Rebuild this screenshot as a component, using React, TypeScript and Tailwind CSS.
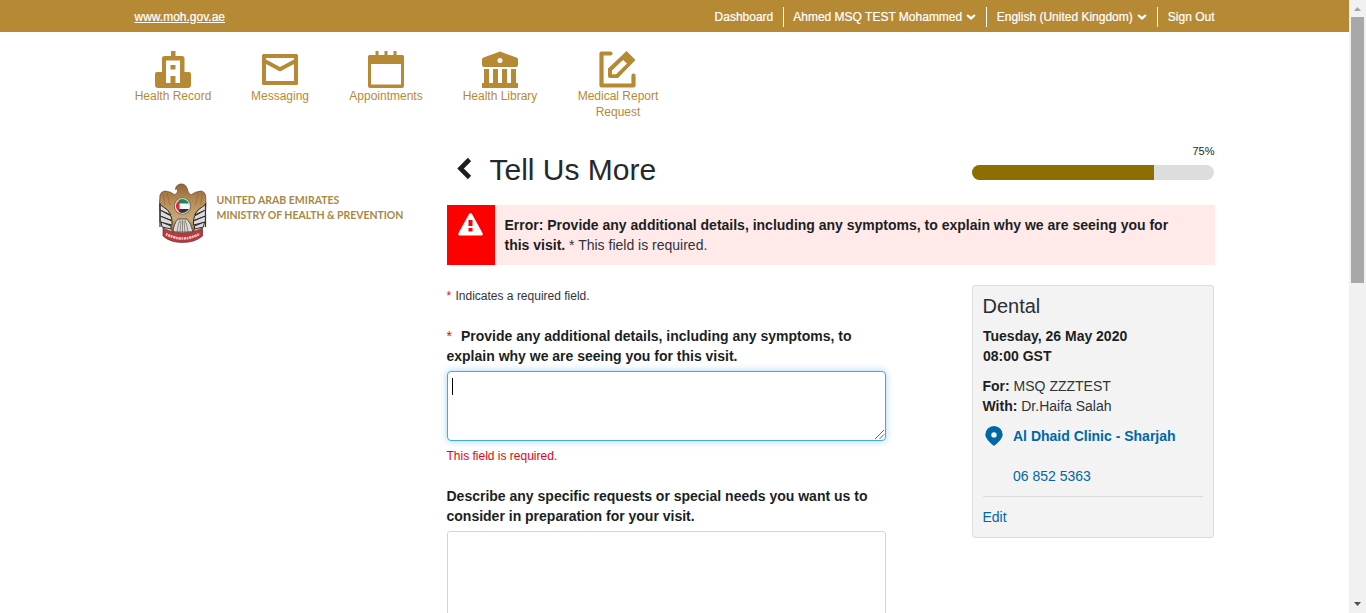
import React from "react";

const GOLD = "#b68a35";

function HospitalIcon() {
  return (
    <svg className="block" width="36" height="37" viewBox="0 0 36 37">
      <path
        fillRule="evenodd"
        fill={GOLD}
        d="M16 0h4.500v5H27q2.500 0 2.500 2.500V21H34q2 0 2 2v11q0 3-3 3H3q-3 0-3-3V23q0-2 2-2h5V7.500Q7 5 9.500 5H16zM11 9.500V32h4.500v-7h5v7H25V9.500zM15.500 14h5v4.500h-5z"
      />
    </svg>
  );
}

function EnvelopeIcon() {
  return (
    <svg className="block" width="36" height="37" viewBox="0 0 36 37">
      <path
        fillRule="evenodd"
        fill={GOLD}
        d="M1.500 3h33Q36 3 36 4.500v28q0 1.500-1.500 1.500h-33Q0 34 0 32.500v-28Q0 3 1.500 3zM4 7v1.500l14 7.500 14-7.500V7zM4 13V30h28V13L18 20.500z"
      />
    </svg>
  );
}

function CalendarIcon() {
  return (
    <svg className="block" width="36" height="37" viewBox="0 0 36 37">
      <path
        fillRule="evenodd"
        fill={GOLD}
        d="M7.500 0h3v4h6V0h3v4h6V0h3v4H34.500Q36 4 36 5.500V35q0 2-2 2H2q-2 0-2-2V5.500Q0 4 1.500 4h6zM3 13v20.500h30V13z"
      />
    </svg>
  );
}

function LibraryIcon() {
  return (
    <svg className="block" width="36" height="37" viewBox="0 0 36 37">
      <path
        fillRule="evenodd"
        fill={GOLD}
        d="M18 .5 34.500 6.500Q36 7.200 36 8.500V14q0 2-2 2H2q-2 0-2-2V8.500Q0 7.200 1.500 6.500zM18 7a2.500 2.500 0 1 0 0 5 2.500 2.500 0 0 0 0-5zM2 18h5v14h4V18h5v14h4V18h5v14h4V18h5v14h2v5H0v-5h2z"
      />
    </svg>
  );
}

function EditIcon() {
  return (
    <svg className="block" width="37" height="37" viewBox="0 0 37 37">
      <path d="M11.500 2.500H2.500v32H34.500V24.500" fill="none" stroke={GOLD} strokeWidth="4.200" strokeLinecap="round" strokeLinejoin="round" />
      <path
        fillRule="evenodd"
        fill={GOLD}
        d="M27.500 0 36.500 9 19 27H11q-2 0-2-2V17.500zM24 9 13 19.500V23.200H17L28 12.500z"
      />
    </svg>
  );
}

function ChevronDown() {
  return (
    <svg className="ml-1 block" width="10" height="6" viewBox="0 0 10 6">
      <path d="M1.100 1 5 4.400 8.900 1" fill="none" stroke="#fff" strokeWidth="2.300" />
    </svg>
  );
}

function Emblem() {
  return (
    <svg className="block" width="48" height="60" viewBox="0 0 48 60">
      <defs>
        <linearGradient id="wing" x1="0" y1="0" x2="0" y2="1">
          <stop offset="0" stopColor="#8f6538" />
          <stop offset=".4" stopColor="#b98f58" />
          <stop offset=".75" stopColor="#c9a878" />
          <stop offset="1" stopColor="#8a6a45" />
        </linearGradient>
      </defs>
      <path
        d="M1 12Q2 8.500 6 8Q12 8.500 16 12Q19.500 9 18.500 5.500L16.500 6.500Q16.500 2 21.500 1Q26 .5 28 5Q28.500 9.500 32 12Q36 8.500 42 8Q45.500 8.500 46.500 12Q47.500 19 46.500 27L35 48H13L1 27Q0 19 1 12z"
        fill="url(#wing)"
        stroke="#69462a"
        strokeWidth=".7"
      />
      <g fill="#dcdbd8" stroke="#2b2828" strokeWidth="1">
        <path d="M1 21.500 8.500 27 12 32 1 27z" />
        <path d="M1 27 12 33 13 37.500 1 33z" />
        <path d="M1 33 13 38 13 42 1 39z" />
        <path d="M2 39 12 43 12 46 3 44z" />
        <path d="M46.500 21.500 39 27 35.500 32 46.500 27z" />
        <path d="M46.500 27 35.500 33 34.500 37.500 46.500 33z" />
        <path d="M46.500 33 34.500 38 34.500 42 46.500 39z" />
        <path d="M45.500 39 35.500 43 35.500 46 44.500 44z" />
        <path d="M14 49Q15 40 19 36H28Q32 40 34 49z" strokeWidth=".7" />
      </g>
      <path d="M1 20v24M46.500 20v24" stroke="#34302f" strokeWidth="1.200" />
      <path d="M4 11 6 22M8 10l3 12M43.500 11l-2 11M39.500 10l-3 12" stroke="#896137" strokeWidth=".6" />
      <path d="M18 49Q19 41 21 37M23.500 37v13M29 49Q28 41 26 37M21 49l1-11M26 49l-1-11" stroke="#77716d" strokeWidth=".8" fill="none" />
      <path d="M4 45Q13 50 23.500 50T43.500 45L43.500 53Q36 59.500 23.500 59.500T4 53z" fill="#b83a3f" stroke="#692a2b" strokeWidth=".7" />
      <path d="M7 51Q15 55.500 23.500 55.500T40.500 51" fill="none" stroke="#f1c9c6" strokeWidth="2.600" strokeDasharray="1.600 .7 2.500 .6" />
      <circle cx="23.500" cy="23" r="8.600" fill="#6b5848" />
      <circle cx="23.500" cy="23" r="7.900" fill="#d7d5d2" />
      <circle cx="23.500" cy="23" r="6.900" fill="#f7f7f7" />
      <path d="M20 20.500V17Q24 14.700 28.300 18L30 20.500z" fill="#168b53" />
      <path d="M20 26v3Q24 31.200 28.300 28L30 26z" fill="#333" />
      <path d="M20.500 16.700v12.600Q13 23 20.500 16.700z" fill="#d82c38" />
    </svg>
  );
}

const navItems = [
  { label: "Health Record", icon: <HospitalIcon />, width: "w-[76px]" },
  { label: "Messaging", icon: <EnvelopeIcon />, width: "w-[58px]" },
  { label: "Appointments", icon: <CalendarIcon />, width: "w-[74px]" },
  { label: "Health Library", icon: <LibraryIcon />, width: "w-[74px]" },
  { label: "Medical Report\nRequest", icon: <EditIcon />, width: "w-[82px]" },
];

function TopBar() {
  return (
    <header className="h-8 bg-[#b68a35] text-xs text-white [-webkit-text-stroke:0.2px_white]">
      <div className="mx-auto flex h-8 w-[1080px] items-center justify-between pt-px">
        <a className="underline" href="#">www.moh.gov.ae</a>
        <div className="flex h-5 items-center leading-5">
          <a href="#" className="pr-[9.500px]">Dashboard</a>
          <span className="flex items-center border-l border-white px-[9.500px]">Ahmed MSQ TEST Mohammed<ChevronDown /></span>
          <span className="flex items-center border-l border-white px-[10px]">English (United Kingdom)<ChevronDown /></span>
          <a href="#" className="border-l border-white pl-[10px]">Sign Out</a>
        </div>
      </div>
    </header>
  );
}

function SummaryCard() {
  return (
    <aside className="mr-px mt-5 h-[253px] w-[242px] shrink-0 rounded-[3px] border border-[#dcdcdc] bg-[#f3f3f3] px-[10px] pt-[10px] text-[#1b1f22]">
      <h2 className="text-xl leading-5 text-[#2b2f32]">Dental</h2>
      <p className="mt-[10px] pl-[0.500px] font-bold">Tuesday, 26 May 2020<br />08:00 GST</p>
      <p className="mt-[10px] text-[#303437]"><b className="text-[#1b1f22]">For:</b> MSQ ZZZTEST<br /><b className="text-[#1b1f22]">With:</b> Dr.Haifa Salah</p>
      <div className="mt-[10px] flex text-[#0067a5]">
        <svg className="ml-[2.500px] mr-[10px] block shrink-0" width="18" height="20" viewBox="0 0 18 20">
          <path fillRule="evenodd" fill="#0067a5" d="M9 0a8.700 8.700 0 0 1 8.700 8.700Q17.700 13 9 20 .3 13 .3 8.700A8.700 8.700 0 0 1 9 0zm0 6.200a2.700 2.700 0 1 0 0 5.400 2.700 2.700 0 0 0 0-5.400z" />
        </svg>
        <div><b>Al Dhaid Clinic - Sharjah</b><br /><br />06 852 5363</div>
      </div>
      <div className="mt-[10px] border-t border-[#d9dadb] pt-[10px] text-[#0067a5]">Edit</div>
    </aside>
  );
}

function Scrollbar() {
  return (
    <div className="flex h-[613px] w-[17px] shrink-0 flex-col items-center justify-between bg-[#f1f1f1]">
      <div className="flex flex-col items-center">
        <svg className="block" width="17" height="17" viewBox="0 0 17 17"><path d="M5 11 8.500 7 12 11z" fill="#a3a3a3" /></svg>
        <div className="h-[266px] w-[13px] bg-[#a8a8a8]" />
      </div>
      <svg className="block" width="17" height="17" viewBox="0 0 17 17"><path d="M5 6h7l-3.500 4z" fill="#505050" /></svg>
    </div>
  );
}

export default function App() {
  return (
    <div className="flex h-[613px] overflow-hidden bg-white font-['Liberation_Sans',Arial,sans-serif] text-sm leading-5 text-[#1b1f22]">
      <div className="w-[1349px] shrink-0">
        <TopBar />
        <nav className="mx-auto flex h-[113px] w-[1080px] gap-10 pt-[19px] text-center text-xs leading-4 text-[#b68a35]">
          {navItems.map((item) => (
            <a key={item.label} href="#" className={`flex shrink-0 flex-col items-center ${item.width}`}>
              {item.icon}
              <span className="whitespace-pre pl-px">{item.label}</span>
            </a>
          ))}
        </nav>
        <div className="mx-auto flex w-[1080px]">
          <div className="flex w-[312px] shrink-0 pl-6 pt-[38px]">
            <Emblem />
            <div className="ml-[10px] mt-[10px] whitespace-nowrap font-['Lato',sans-serif] text-[10.500px] font-bold leading-[15px] text-[#a98745]">
              <div>UNITED ARAB EMIRATES</div>
              <div className="tracking-[-0.04px]">MINISTRY OF HEALTH &amp; PREVENTION</div>
            </div>
          </div>
          <main className="w-[768px]">
            <div className="flex h-[60px] justify-between">
              <div className="flex items-start">
                <svg className="ml-[8px] mt-[12px] block" width="17" height="23" viewBox="0 0 17 23"><path d="M14.500 2.500 5.500 11.500l9 9" fill="none" stroke="#1b1f22" strokeWidth="4.600" /></svg>
                <h1 className="ml-[18px] mt-[5px] text-[30px] leading-10 text-[#25292c]">Tell Us More</h1>
              </div>
              <div className="w-[243px]">
                <div className="h-5 text-right text-[11px] leading-[13px]">75%</div>
                <div className="mr-px h-[15px] overflow-hidden rounded-full bg-[#dcddde]"><div className="h-full w-[182px] bg-[#8d6e00]" /></div>
              </div>
            </div>
            <div className="flex h-[60px] bg-[#ffe9e9]">
              <div className="w-12 shrink-0 bg-[#ff0000] pl-[11px] pt-2">
                <svg className="block" width="25" height="23" viewBox="0 0 25 23"><path fillRule="evenodd" fill="#fff" d="M11 1q1.500-2 3 0L24.500 20q1 2.500-1.500 2.500H2Q-.5 22.500 .5 20zM10.500 7v6h4V7zM10.500 15v3.500h4V15z" /></svg>
              </div>
              <p className="pl-[10px] pt-[10px] text-[#303437]"><b className="text-[#1b1f22]">Error: Provide any additional details, including any symptoms, to explain why we are seeing you for<br />this visit.</b> * This field is required.</p>
            </div>
            <div className="flex justify-between">
              <div className="w-[439px]">
                <p className="mt-[21px] text-xs leading-5 text-[#303437]"><span className="mr-px text-[#e30613]">*</span> Indicates a required field.</p>
                <p className="mt-5 font-bold"><span className="mr-[9px] font-normal text-[#e30613]">*</span>Provide any additional details, including any symptoms, to<br />explain why we are seeing you for this visit.</p>
                <div className="mt-[5px] flex h-[70px] flex-col justify-between rounded-[4px] border border-[#43a9e0] bg-white pl-1 pt-[6px] shadow-[0_0_7px_rgba(67,169,224,0.5)]">
                  <div className="h-[17px] w-px bg-black" />
                  <svg className="block self-end" width="10" height="10" viewBox="0 0 10 10"><path d="M0 9 9 0M4.500 9 9 4.500" stroke="#555" strokeWidth=".9" /></svg>
                </div>
                <p className="mt-[5px] text-xs leading-5 text-[#e30613]">This field is required.</p>
                <p className="mt-5 font-bold">Describe any specific requests or special needs you want us to<br />consider in preparation for your visit.</p>
                <div className="mt-[5px] h-[100px] rounded-[3px] border border-[#d3d4d5] bg-white" />
              </div>
              <SummaryCard />
            </div>
          </main>
        </div>
      </div>
      <Scrollbar />
    </div>
  );
}
